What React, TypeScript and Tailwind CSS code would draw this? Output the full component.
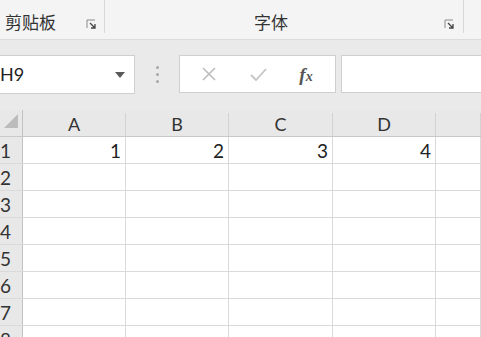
import React from "react";

const cols = [
  { name: "A", w: "w-[103px]", v: "1" },
  { name: "B", w: "w-[103px]", v: "2" },
  { name: "C", w: "w-[104px]", v: "3" },
  { name: "D", w: "w-[103px]", v: "4" },
  { name: "", w: "flex-1", v: "" },
];

const rows = [1, 2, 3, 4, 5, 6, 7, 8];

function Launcher() {
  return (
    <svg width="11" height="11" viewBox="0 0 11 11" className="shrink-0 mb-[2px]">
      <path d="M1 9V1h8" fill="none" stroke="#8a8a8a" strokeWidth="1" />
      <path d="M4 4l5 5M9 5v4H5" fill="none" stroke="#444" strokeWidth="1.3" />
    </svg>
  );
}

export default function App() {
  const latin = { fontFamily: "Lato, 'Noto Sans', 'Noto Sans CJK SC', sans-serif" };
  const cjk = { fontFamily: "'Noto Sans CJK SC', sans-serif" };
  return (
    <div className="w-[481px] h-[337px] overflow-hidden bg-white" style={latin}>
      {/* ribbon */}
      <div className="h-[40px] bg-[#f4f4f4] border-b border-[#dcdcdc] flex">
        <div className="w-[105px] flex items-end justify-between pl-[5px] pr-[7px] pb-[1px] border-r border-[#d8d8d8] mb-[6px]">
          <span className="text-[17px] leading-[20px] text-[#333]" style={cjk}>
            剪贴板
          </span>
          <Launcher />
        </div>
        <div className="w-[359px] flex items-end pl-[149px] pr-[8px] pb-[1px] border-r border-[#d8d8d8] mb-[6px]">
          <span className="flex-1 text-[17px] leading-[20px] text-[#333]" style={cjk}>
            字体
          </span>
          <Launcher />
        </div>
      </div>

      {/* formula bar */}
      <div className="h-[70px] bg-[#eaeaea] pt-[15px] flex items-start">
        <div className="-ml-px w-[136px] h-[39px] bg-white border border-[#cfcfcf] flex items-center justify-between pr-[9px]">
          <span className="text-[18px] text-[#222]">H9</span>
          <svg width="10" height="6" viewBox="0 0 10 6">
            <path d="M0 0h10L5 6z" fill="#5a5a5a" />
          </svg>
        </div>
        <div className="w-[44px] h-[39px] flex flex-col items-center justify-center gap-[4px]">
          <span className="w-[3px] h-[3px] rounded-full bg-[#a8a8a8]" />
          <span className="w-[3px] h-[3px] rounded-full bg-[#a8a8a8]" />
          <span className="w-[3px] h-[3px] rounded-full bg-[#a8a8a8]" />
        </div>
        <div className="w-[157px] h-[38px] bg-white border border-[#cfcfcf] flex items-center">
          <div className="w-[56px] flex justify-center pl-[2px]">
            <svg width="14" height="14" viewBox="0 0 14 14">
              <path d="M1 1l12 12M13 1L1 13" stroke="#bdbdbd" strokeWidth="1.6" fill="none" />
            </svg>
          </div>
          <div className="w-[45px] flex justify-center">
            <svg width="17" height="13" viewBox="0 0 17 13">
              <path d="M1 7l5 5L16 1" stroke="#c4c4c4" strokeWidth="1.8" fill="none" />
            </svg>
          </div>
          <div className="w-[50px] flex justify-center">
            <span className="text-[19px] leading-none italic font-bold text-[#555]" style={{ fontFamily: "'Liberation Serif', serif" }}>
              f<span className="text-[14px]">x</span>
            </span>
          </div>
        </div>
        <div className="ml-[5px] flex-1 h-[38px] bg-white border border-[#cfcfcf] border-r-0" />
      </div>

      {/* column header */}
      <div className="h-[27px] bg-[#e8e8e8] border-b border-[#c9c9c9] flex">
        <div className="w-[23px] border-r border-[#c2c2c2] relative shrink-0">
          <svg width="14" height="14" viewBox="0 0 14 14" className="absolute left-[4px] bottom-[8px]">
            <path d="M14 0V14H0z" fill="#bcbcbc" />
          </svg>
        </div>
        {cols.map((c, i) => (
          <div
            key={i}
            className={`${c.w} shrink-0 border-r border-[#d2d2d2] mt-[3px] flex items-center justify-center text-[18px] text-[#333]`}
          >
            {c.name}
          </div>
        ))}
      </div>

      {/* grid */}
      {rows.map((r) => (
        <div key={r} className="h-[27px] flex border-b border-[#dadada]">
          <div className="w-[23px] shrink-0 bg-[#e8e8e8] border-r border-[#c2c2c2] flex items-center overflow-hidden">
            <span className="text-[19px] leading-none text-[#333]">{r}</span>
          </div>
          {cols.map((c, i) => (
            <div
              key={i}
              className={`${c.w} shrink-0 border-r border-[#dadada] flex items-center justify-end pr-[4px] pt-[2px] text-[19px] text-[#222]`}
            >
              {r === 1 ? c.v : ""}
            </div>
          ))}
        </div>
      ))}
    </div>
  );
}
